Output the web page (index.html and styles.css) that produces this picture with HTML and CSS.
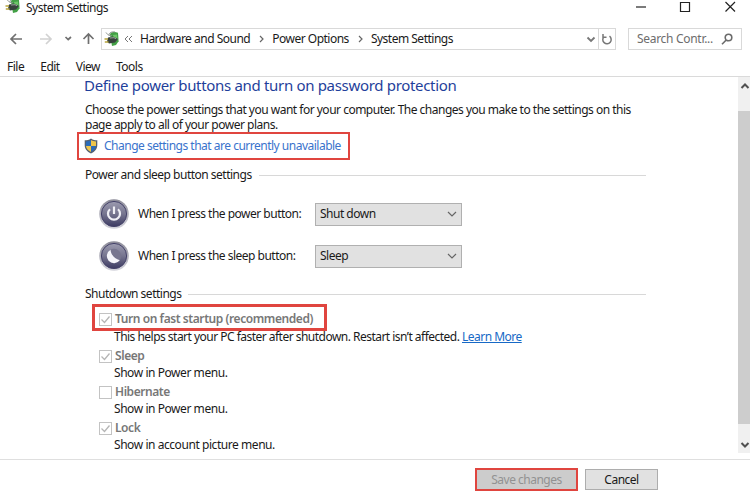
FILE: index.html
```html
<!DOCTYPE html>
<html lang="en">
<head>
<meta charset="utf-8">
<title>System Settings</title>
<link rel="stylesheet" href="styles.css">
</head>
<body>
<svg width="0" height="0" class="defs">
  <defs>
    <linearGradient id="orb" x1="0" y1="0" x2="0" y2="1"><stop offset="0" stop-color="#9c9bb0"/><stop offset=".5" stop-color="#76758f"/><stop offset="1" stop-color="#3c3a62"/></linearGradient>
    <linearGradient id="rim" x1="0" y1="0" x2="0" y2="1"><stop offset="0" stop-color="#8c8b98"/><stop offset="1" stop-color="#d4d4dc"/></linearGradient>
    <symbol id="plug" viewBox="0 0 16 16">
      <path d="M6 4C6 1.500 8 .6 11 1l3 .8.6 8.500L12 14l-4 1z" fill="#43a046"/>
      <path d="M9 4l4-.5.5 5L10 11z" fill="#6cc668"/>
      <path d="M2 1.500c2 3 4 3.500 6 3M5 4C5 1.500 8 .5 11 1" fill="none" stroke="#8c9490"/>
      <path d="M4 6.500l5-1 5 2.500-3 3.500-6 1-2-2z" fill="#38423d"/>
      <path d="M6 7l4-.3 2 1" fill="none" stroke="#9ba59f"/>
      <path d="M.5 8H4M.8 11H4.500" stroke="#b8a53c" stroke-width="1.700"/>
    </symbol>
  </defs>
</svg>
<div class="window">
  <header class="titlebar">
    <svg class="plug" width="16" height="16"><use href="#plug"/></svg>
    <span class="title">System Settings</span>
    <svg class="controls" width="110" height="14" fill="none" stroke="#222" stroke-width="1.200"><path d="M1 7h10"/><path d="M45.500 2.500h9v9h-9z"/><path d="M90.500 2l9.500 9.500M100 2l-9.500 9.500"/></svg>
  </header>
  <nav class="navbar">
    <svg class="arrows" width="101" height="22" fill="none" stroke="#707070" stroke-width="1.700">
      <path d="M22 11H11M16 6l-5 5 5 5"/>
      <path stroke="#d2d2d2" d="M40 11h11M46 6l5 5-5 5"/>
      <path d="M65.500 9l2.700 2.500L71 9"/>
      <path d="M88.500 16V6M83.500 11l5-5 5 5"/>
    </svg>
    <div class="address">
      <svg class="plug" width="16" height="16"><use href="#plug"/></svg>
      <svg class="back" width="9" height="8" fill="none" stroke="#777"><path d="M4 1L1 4l3 3M8 1L5 4l3 3"/></svg>
      <span class="c1">Hardware and Sound</span>
      <svg class="sep" width="5" height="8" fill="none" stroke="#666" stroke-width="1.200"><path d="M1 1l3 3-3 3"/></svg>
      <span class="c2">Power Options</span>
      <svg class="sep" width="5" height="8" fill="none" stroke="#666" stroke-width="1.200"><path d="M1 1l3 3-3 3"/></svg>
      <span class="c3">System Settings</span>
      <svg class="drop" width="10" height="7" fill="none" stroke="#777" stroke-width="1.800"><path d="M1.500 1.500L5 5l3.500-3.500"/></svg>
      <span class="refresh"><svg width="12" height="13" fill="none" stroke="#777" stroke-width="1.500"><path d="M8.500 3.200A4.200 4.200 0 1 1 3 3.600M2 1v3.200h3.500"/></svg></span>
    </div>
    <div class="search"><span>Search Contr...</span><svg width="12" height="12" fill="none" stroke="#6b6b6b" stroke-width="1.600"><circle cx="7.500" cy="4.500" r="3.300"/><path d="M5.200 7L1 11.200"/></svg></div>
  </nav>
  <div class="menu"><span>File</span><span>Edit</span><span>View</span><span>Tools</span></div>
  <div class="body">
    <main>
      <h1>Define power buttons and turn on password protection</h1>
      <p class="intro"><span>Choose the power settings that you want for your computer. The changes you make to the settings on this</span><br><span>page apply to all of your power plans.</span></p>
      <div class="change">
        <svg width="14" height="16" viewBox="0 0 14 16"><path d="M7 .5C5 2 3 2.300.7 2.300V7c0 4 2.300 6.500 6.300 8.500 4-2 6.300-4.500 6.300-8.500V2.300C11 2.300 9 2 7 .5z" fill="#55616f"/><path d="M7 2C5.500 3 4 3.400 2 3.500V8h5z" fill="#2c6cb8"/><path d="M7 2c1.500 1 3 1.400 5 1.500V8H7z" fill="#efc64b"/><path d="M2 8h5v6C4 12.500 2.300 10.500 2 8z" fill="#efc64b"/><path d="M12 8H7v6c3-1.500 4.700-3.500 5-6z" fill="#2c6cb8"/></svg>
        <a>Change settings that are currently unavailable</a>
      </div>
      <div class="section s1"><span>Power and sleep button settings</span></div>
      <div class="row">
        <svg width="32" height="32"><circle cx="16" cy="16" r="14.800" fill="url(#rim)"/><circle cx="16" cy="16" r="12.600" fill="url(#orb)" stroke="#45436a"/><path d="M12 11.200a6 6 0 1 0 8 0M16 8.500v7.500" fill="none" stroke="#f0f0f6" stroke-width="2.200"/></svg>
        <label>When I press the power button:</label>
        <div class="select"><span>Shut down</span><svg width="10" height="6" fill="none" stroke="#666" stroke-width="1.200"><path d="M1 1l4 4 4-4"/></svg></div>
      </div>
      <div class="row">
        <svg width="32" height="32"><circle cx="16" cy="16" r="14.800" fill="url(#rim)"/><circle cx="16" cy="16" r="12.600" fill="url(#orb)" stroke="#45436a"/><circle cx="16" cy="16" r="7.200" fill="#77768f"/><path d="M12.500 9.700a7.200 7.200 0 1 0 9.300 10.600C17 19 13 15 12.500 9.700z" fill="#f5f5fa"/></svg>
        <label>When I press the sleep button:</label>
        <div class="select"><span>Sleep</span><svg width="10" height="6" fill="none" stroke="#666" stroke-width="1.200"><path d="M1 1l4 4 4-4"/></svg></div>
      </div>
      <div class="section s2"><span>Shutdown settings</span></div>
      <div class="fast"><i class="box"><svg width="11" height="11"><path d="M1.500 5.500l3 3 5-6"/></svg></i><b>Turn on fast startup (recommended)</b></div>
      <p class="desc fastdesc"><span>This helps start your PC faster after shutdown. Restart isn’t affected.</span> <a>Learn More</a></p>
      <div class="opt"><i class="box"><svg width="11" height="11"><path d="M1.500 5.500l3 3 5-6"/></svg></i><b>Sleep</b></div>
      <p class="desc">Show in Power menu.</p>
      <div class="opt"><i class="box"></i><b>Hibernate</b></div>
      <p class="desc">Show in Power menu.</p>
      <div class="opt"><i class="box"><svg width="11" height="11"><path d="M1.500 5.500l3 3 5-6"/></svg></i><b>Lock</b></div>
      <p class="desc">Show in account picture menu.</p>
    </main>
    <aside class="scroll">
      <svg width="12" height="34" fill="none" stroke="#505050" stroke-width="2"><path d="M3.500 11L7 7.500l3.500 3.500"/></svg>
      <div class="thumb"></div>
      <svg width="12" height="29" fill="none" stroke="#505050" stroke-width="2"><path d="M3.500 19L7 22.500l3.500-3.500"/></svg>
    </aside>
  </div>
  <footer><button class="save">Save changes</button><button class="cancel">Cancel</button></footer>
</div>
</body>
</html>
```
FILE: styles.css
```css
* { box-sizing: border-box; }
body { margin: 0; background: #fff; color: #1a1a1a; font: 12px/14px "Noto Sans", "Open Sans", sans-serif; letter-spacing: -.5px; }
svg { display: block; flex: none; }
.defs { position: absolute; }
.window { width: 750px; height: 500px; display: flex; flex-direction: column; overflow: hidden; }
span, a, b, label { white-space: nowrap; }
.titlebar { height: 28px; display: flex; align-items: flex-start; padding-left: 5px; }
.titlebar .plug { margin-top: -2px; }
.title { margin: 0 0 0 5px; line-height: 16px; }
.controls { margin-left: auto; margin-right: 5px; }
.navbar { height: 22px; display: flex; }
.address { width: 515px; height: 22px; border: 1px solid #d9d9d9; display: flex; align-items: center; padding-left: 2px; }
.back { margin: 0 7px 0 4px; }
.sep { margin: 0 8px 0 9px; }
.drop { margin-left: auto; margin-right: 2px; }
.refresh { width: 17px; height: 20px; border-left: 1px solid #d9d9d9; display: grid; place-items: center; }
.search { width: 114px; height: 22px; margin-left: 12px; border: 1px solid #d9d9d9; display: flex; justify-content: space-between; align-items: center; padding: 0 8px; color: #6d6d6d; letter-spacing: -.3px; }
.menu { height: 27px; padding: 10px 0 0 7px; display: flex; gap: 16px; border-bottom: 1px solid #dadada; }
.body { height: 382px; display: flex; }
main { width: 738px; padding-left: 85px; overflow: hidden; }
h1 { margin: 0 0 0 -1px; font-size: 15px; line-height: 17px; font-weight: 400; color: #1f3f9b; white-space: nowrap; letter-spacing: -.32px; }
p { margin: 0; }
.intro { margin-top: 8px; line-height: 15px; }
.change { width: 273px; height: 28px; margin: 0 0 0 -8px; border: 2px solid #e0453f; display: flex; align-items: center; padding-left: 5px; gap: 6px; color: #3a73cc; }
.section { display: flex; align-items: center; width: 561px; height: 14px; }
.section::after { content: ""; flex: 1; height: 1px; margin-left: 7px; background: #d8d8d8; }
.s1 { margin: 8px 0 11px; }
.row { height: 42px; display: flex; align-items: center; padding-left: 13px; }
.row label { width: 177px; margin-left: 8px; }
.select { width: 147px; height: 23px; border: 1px solid #b0b0b0; background: #e1e1e1; display: flex; align-items: center; justify-content: space-between; padding: 0 4px; }
.s2 { margin: 10px 0 3px; }
.fast { width: 235px; height: 27px; margin-left: 7px; border: 3px solid #e0453f; display: flex; align-items: center; padding: 3px 0 0 4px; }
.box { width: 13px; height: 13px; border: 1px solid #c3c3c3; margin-right: 3px; flex: none; }
.box svg { fill: none; stroke: #b5b5b5; stroke-width: 1.3; }
b { color: #777; font-weight: 600; letter-spacing: -.43px; }
.opt { height: 18px; display: flex; align-items: center; padding-left: 14px; }
.desc { margin-left: 29px; height: 18px; line-height: 16px; letter-spacing: -.44px; }
.fastdesc { margin-top: -1px; height: 17px; line-height: 13px; letter-spacing: -.52px; }
.fastdesc a { color: #1769c6; text-decoration: underline; }
.scroll { width: 12px; background: #f0f0f0; height: 376px; }
.thumb { height: 313px; background: #cdcdcd; }
footer { flex: 1; border-top: 1px solid #dfdfdf; display: flex; padding: 8px 0 0 475px; gap: 7px; }
button { font: inherit; letter-spacing: inherit; border: 1px solid #adadad; background: #e1e1e1; padding: 0; color: #1a1a1a; }
.save { width: 103px; height: 23px; border: 2px solid #e0453f; background: #ccc; color: #929292; }
.cancel { width: 73px; height: 21px; margin-top: 1px; }
```
